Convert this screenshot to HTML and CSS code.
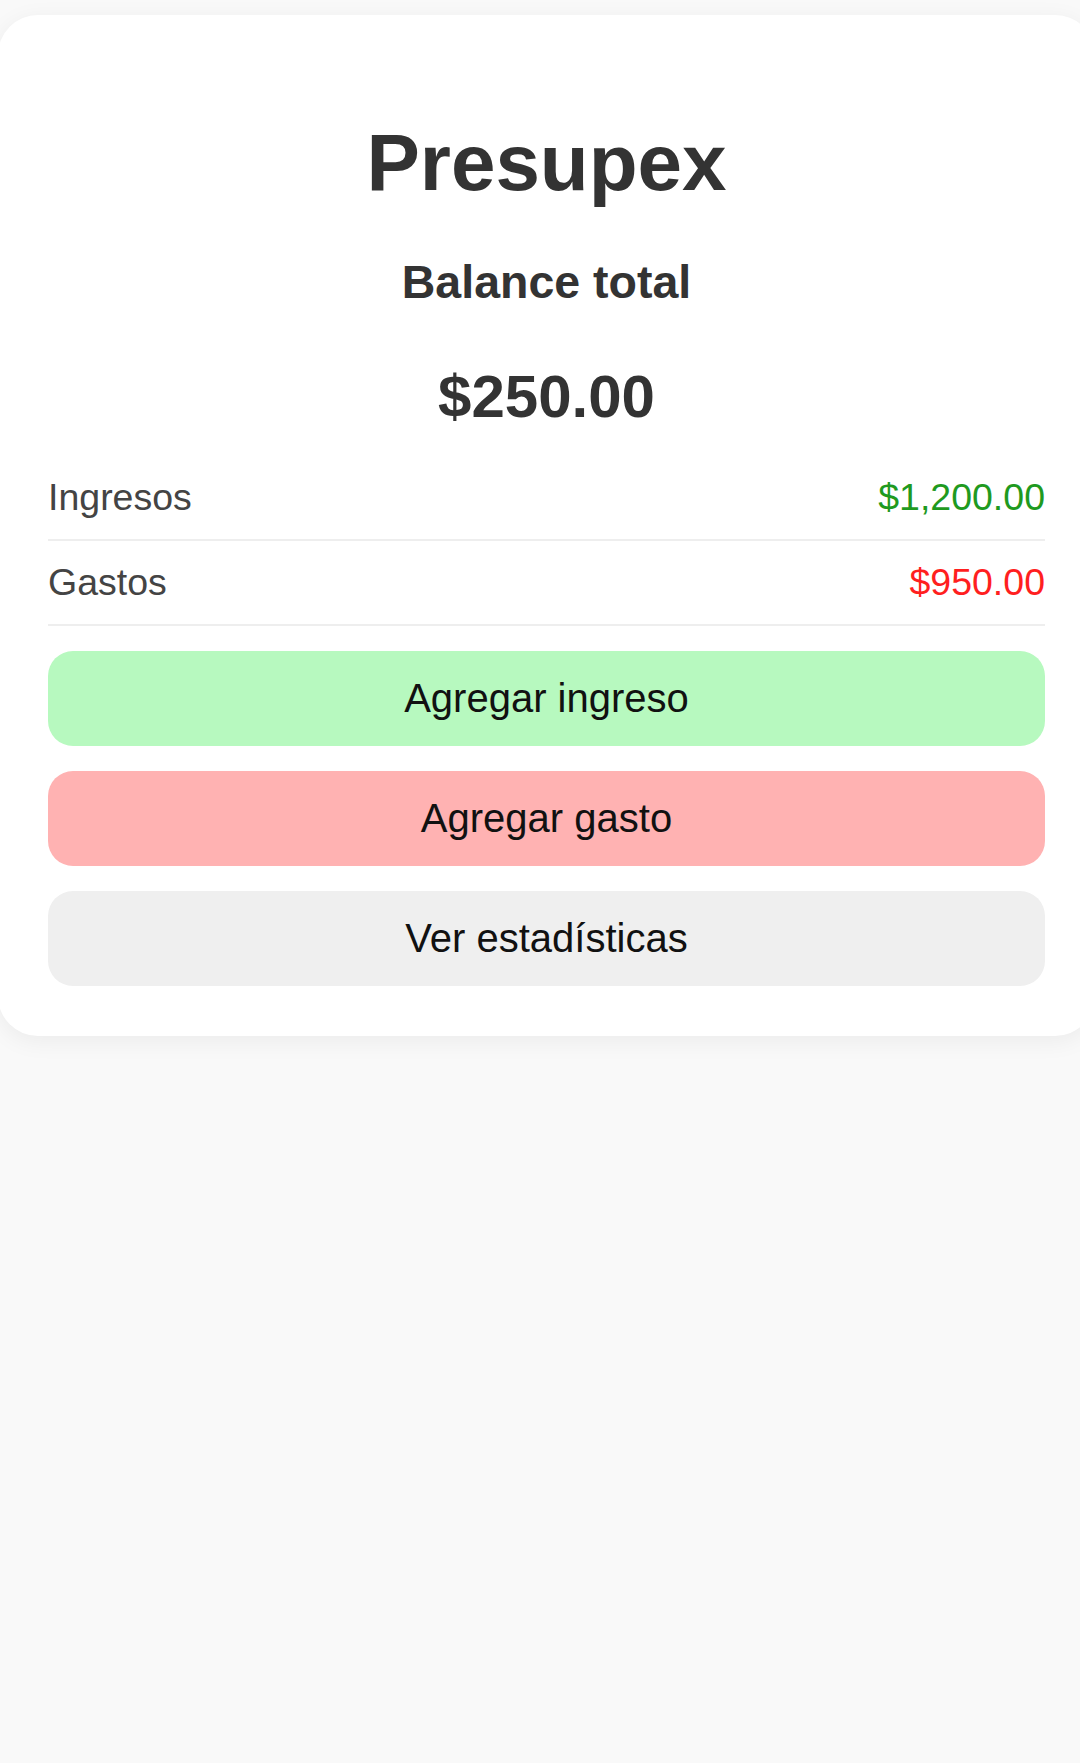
FILE: index.html
```html
<!DOCTYPE html>
<html lang="es">
<head>
<meta charset="utf-8">
<title>Presupex</title>
<link rel="stylesheet" href="styles.css">
</head>
<body>
  <main class="card">
    <h1 class="title">Presupex</h1>
    <h3 class="balance-label">Balance total</h3>
    <h2 class="balance-amount">$250.00</h2>
    <div class="row">
      <span class="row-label">Ingresos</span>
      <span class="row-value income">$1,200.00</span>
    </div>
    <div class="row">
      <span class="row-label">Gastos</span>
      <span class="row-value expense">$950.00</span>
    </div>
    <button class="btn btn-income">Agregar ingreso</button>
    <button class="btn btn-expense">Agregar gasto</button>
    <button class="btn btn-stats">Ver estadísticas</button>
  </main>
</body>
</html>
```
FILE: styles.css
```css
html, body {
  margin: 0;
  padding: 0;
  overflow-x: hidden;
}
body {
  background: #f9f9f9;
  font-family: "Liberation Sans", Arial, sans-serif;
  color: #333;
  min-height: 1763px;
}
.card {
  display: flex;
  flex-direction: column;
  box-sizing: border-box;
  width: 1097px;
  margin: 15px 0 0 -2px;
  padding: 50px 50px 50px 50px;
  background: #ffffff;
  border-radius: 40px;
  box-shadow: 0 5px 25px rgba(0, 0, 0, 0.06);
}
.title {
  margin: 52px 0 46px;
  font-size: 80px;
  font-weight: bold;
  text-align: center;
  color: #333;
}
.balance-label {
  margin: 0 0 53px;
  font-size: 46.5px;
  font-weight: bold;
  text-align: center;
  color: #333;
}
.balance-amount {
  margin: 0 0 25px;
  font-size: 60px;
  font-weight: bold;
  text-align: center;
  color: #333;
}
.row {
  display: flex;
  justify-content: space-between;
  align-items: center;
  padding: 20px 0;
  border-bottom: 2px solid #eeeeee;
  font-size: 37.5px;
}
.row-label {
  color: #444;
}
.income {
  color: #1f9a1f;
}
.expense {
  color: #ff1f1f;
}
.btn {
  display: block;
  width: 100%;
  margin-top: 25px;
  padding: 25px 0;
  border: none;
  border-radius: 25px;
  font-family: "Liberation Sans", Arial, sans-serif;
  font-size: 40px;
  line-height: normal;
  color: #111;
  text-align: center;
}
.btn-income {
  background: #b7f9bf;
}
.btn-expense {
  background: #ffb2b2;
}
.btn-stats {
  background: #efefef;
}
```
